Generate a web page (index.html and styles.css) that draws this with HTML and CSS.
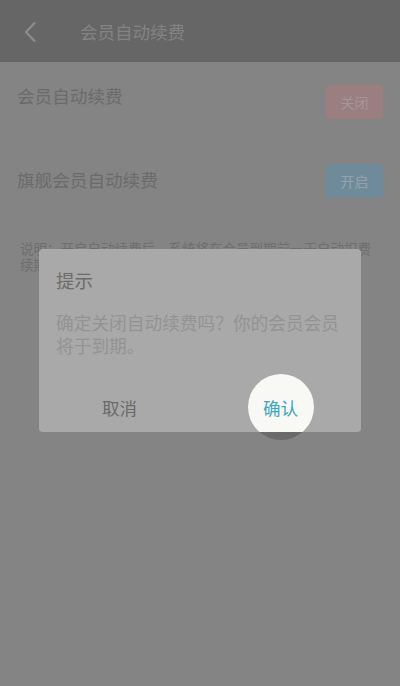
FILE: index.html
```html
<!DOCTYPE html>
<html lang="zh-CN">
<head>
<meta charset="utf-8">
<title>会员自动续费</title>
<link rel="stylesheet" href="styles.css">
</head>
<body>
<div class="page">
  <header class="header">
    <svg class="back" width="14" height="22" viewBox="0 0 14 22"><path d="M11.5 2 L3 11 L11.5 20" fill="none" stroke="#8b8b8b" stroke-width="2.4" stroke-linecap="round" stroke-linejoin="round"/></svg>
    <div class="title">会员自动续费</div>
  </header>
  <section class="list">
    <div class="row row-first">
      <span class="label">会员自动续费</span>
      <span class="btn btn-off">关闭</span>
    </div>
    <div class="row row-second">
      <span class="label">旗舰会员自动续费</span>
      <span class="btn btn-on">开启</span>
    </div>
  </section>
  <p class="note">说明：开启自动续费后，系统将在会员到期前一天自动扣费续期，您可随时在此页面关闭自动续费服务。</p>
</div>
<div class="modal">
  <div class="ripple-shadow"></div>
  <div class="dialog">
    <div class="dialog-title">提示</div>
    <div class="dialog-msg">确定关闭自动续费吗？你的会员会员将于到期。</div>
    <div class="dialog-actions">
      <span class="action action-cancel">取消</span>
      <span class="action action-ok">确认</span>
    </div>
    <div class="ripple"></div>
  </div>
</div>
</body>
</html>
```
FILE: styles.css
```css
html, body {
  margin: 0;
  padding: 0;
}
body {
  width: 400px;
  height: 686px;
  background: #848484;
  position: relative;
  overflow: hidden;
  font-family: "Noto Sans CJK SC", "Noto Sans", sans-serif;
}
.page {
  display: flex;
  flex-direction: column;
}
.header {
  height: 62px;
  background: #666666;
  display: flex;
  align-items: center;
  padding-left: 23px;
}
.back {
  display: block;
  margin-top: 1px;
}
.title {
  margin-left: 43px;
  font-size: 17.5px;
  line-height: 24px;
  color: #838383;
  margin-top: 1px;
}
.list {
  display: flex;
  flex-direction: column;
}
.row {
  display: flex;
  align-items: center;
  justify-content: space-between;
  padding: 0 17px;
}
.row-first {
  height: 80px;
}
.row-second {
  height: 78px;
}
.label {
  font-size: 17.6px;
  line-height: 24px;
  color: #6b6b6b;
  margin-top: -12px;
}
.row-second .label {
  margin-top: -3px;
}
.btn {
  width: 57px;
  height: 34px;
  border-radius: 3px;
  display: flex;
  align-items: center;
  justify-content: center;
  font-size: 14px;
  color: #a39797;
}
.btn-off {
  background: #9b7f80;
}
.btn-on {
  background: #6f8b9a;
  color: #94a3ab;
}
.note {
  margin: 20px 0 0;
  padding: 0 20px;
  font-size: 13.5px;
  line-height: 16px;
  color: #6e6e6e;
}
.modal {
  position: absolute;
  inset: 0;
}
.ripple-shadow {
  position: absolute;
  left: 248px;
  top: 374px;
  width: 66px;
  height: 66px;
  border-radius: 50%;
  background: #6a6a6a;
}
.dialog {
  position: absolute;
  left: 39px;
  top: 249px;
  width: 322px;
  height: 183px;
  background: #a9a9a9;
  border-radius: 4px;
  overflow: hidden;
  display: flex;
  flex-direction: column;
}
.dialog-title {
  padding: 19px 17px 0;
  font-size: 18.5px;
  line-height: 24px;
  color: #6c6c6c;
}
.dialog-msg {
  margin-top: 19px;
  padding: 0 17px;
  font-size: 17.7px;
  line-height: 22.5px;
  color: #939393;
}
.dialog-actions {
  margin-top: auto;
  height: 52px;
  display: flex;
  position: relative;
  z-index: 2;
}
.action {
  flex: 1;
  display: flex;
  align-items: center;
  justify-content: center;
  font-size: 17.5px;
  padding-top: 2px;
}
.action-cancel {
  color: #6a6a6a;
}
.action-ok {
  color: #37a7c2;
}
.ripple {
  position: absolute;
  left: 209px;
  top: 125px;
  width: 66px;
  height: 66px;
  border-radius: 50%;
  background: #f8f8f4;
  z-index: 1;
}
```
